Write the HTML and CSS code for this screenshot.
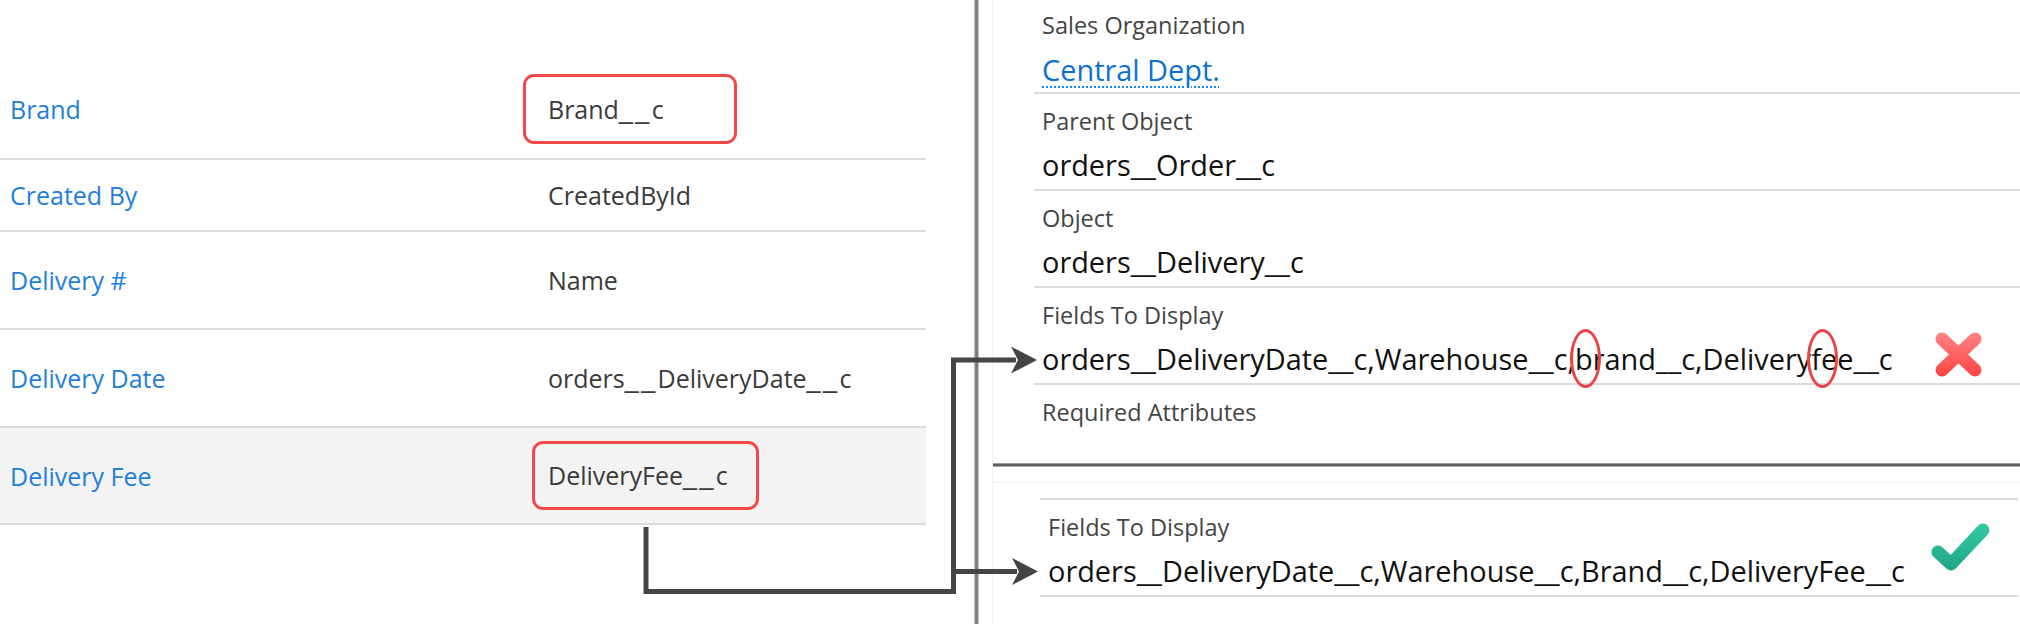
FILE: index.html
```html
<!DOCTYPE html>
<html lang="en">
<head>
<meta charset="utf-8">
<title>Fields To Display</title>
<link rel="stylesheet" href="styles.css">
</head>
<body>
<div class="page">
  <section class="left">
    <div class="row r1"><span class="lbl">Brand</span><span class="val"><span class="box box-brand">Brand<span class="us">__</span>c</span></span></div>
    <div class="row r2"><span class="lbl">Created By</span><span class="val">CreatedById</span></div>
    <div class="row r3"><span class="lbl">Delivery #</span><span class="val">Name</span></div>
    <div class="row r4"><span class="lbl">Delivery Date</span><span class="val">orders<span class="us">__</span>DeliveryDate<span class="us">__</span>c</span></div>
    <div class="row r5"><span class="lbl">Delivery Fee</span><span class="val"><span class="box box-fee">DeliveryFee<span class="us">__</span>c</span></span></div>
  </section>
  <div class="spacer"></div>
  <div class="vsep"></div>
  <section class="right">
    <div class="panel">
      <div class="group g1">
        <div class="field first">
          <div class="flabel">Sales Organization</div>
          <div class="fval"><span class="link">Central Dept.</span></div>
        </div>
        <div class="field">
          <div class="flabel">Parent Object</div>
          <div class="fval">orders__Order__c</div>
        </div>
        <div class="field">
          <div class="flabel">Object</div>
          <div class="fval">orders__Delivery__c</div>
        </div>
        <div class="field">
          <div class="flabel">Fields To Display</div>
          <div class="fval">orders__DeliveryDate__c,Warehouse__c,<span class="circ circ-b">b</span>rand__c,Delivery<span class="circ circ-f">f</span>ee__c</div>
        </div>
        <div class="field req">
          <div class="flabel">Required Attributes</div>
        </div>
      </div>
      <div class="thick"></div>
      <div class="faint"></div>
      <div class="group g2">
        <div class="field">
          <div class="flabel">Fields To Display</div>
          <div class="fval">orders__DeliveryDate__c,Warehouse__c,Brand__c,DeliveryFee__c</div>
        </div>
      </div>
    </div>
  </section>
</div>
<svg class="overlay" width="2020" height="624" viewBox="0 0 2020 624" aria-hidden="true">
  <defs>
    <linearGradient id="redg" gradientUnits="userSpaceOnUse" x1="0" y1="332" x2="0" y2="377">
      <stop offset="0" stop-color="#ff8484"/>
      <stop offset="1" stop-color="#ff4242"/>
    </linearGradient>
    <linearGradient id="greeng" gradientUnits="userSpaceOnUse" x1="0" y1="524" x2="0" y2="574">
      <stop offset="0" stop-color="#34c9a3"/>
      <stop offset="1" stop-color="#1ea283"/>
    </linearGradient>
  </defs>
  <path d="M646 527 V591.5 H953.5 V360 H1016" fill="none" stroke="#454545" stroke-width="5"/>
  <path d="M953.5 571.5 H1017" fill="none" stroke="#454545" stroke-width="5"/>
  <path d="M1037 360 L1011 346.5 L1018 360 L1011 373.5 Z" fill="#454545"/>
  <path d="M1038 571.5 L1012 558 L1019 571.5 L1012 585 Z" fill="#454545"/>
  <g stroke="url(#redg)" stroke-width="13" stroke-linecap="round">
    <line x1="1942" y1="339" x2="1975" y2="370"/>
    <line x1="1975" y1="339" x2="1942" y2="370"/>
  </g>
  <polyline points="1938,552 1951,564 1983,530" fill="none" stroke="url(#greeng)" stroke-width="13" stroke-linecap="round" stroke-linejoin="round"/>
</svg>
</body>
</html>
```

FILE: styles.css
```css
html, body {
  margin: 0;
  padding: 0;
}

body {
  width: 2020px;
  height: 624px;
  overflow: hidden;
  background: #ffffff;
  font-family: "Open Sans", "Noto Sans", sans-serif;
  position: relative;
}

.page {
  display: flex;
  height: 624px;
}

/* ---------- left related-list table ---------- */
.left {
  flex: 0 0 926px;
  padding-top: 60px;
}

.row {
  display: flex;
  align-items: center;
  border-bottom: 2px solid #dddbda;
  padding-left: 10px;
}

.r1 { height: 98px; }
.r2 { height: 70px; }
.r3, .r4 { height: 96px; }
.r5 { height: 95px; background: #f3f3f3; }

.lbl {
  flex: 0 0 538px;
  color: #1f80d9;
  font-size: 25px;
}

.val {
  color: #3a3a3a;
  font-size: 25px;
  white-space: nowrap;
}

.us {
  font-family: "Liberation Sans", "Open Sans", sans-serif;
  letter-spacing: 2.5px;
}

.box {
  display: inline-block;
  box-sizing: border-box;
  border: 3px solid #f24848;
  border-radius: 11px;
}

.box-brand {
  width: 214px;
  height: 70px;
  margin-left: -25px;
  padding-left: 22px;
  line-height: 64px;
}

.box-fee {
  width: 227px;
  height: 69px;
  margin-left: -16px;
  padding-left: 13px;
  line-height: 63px;
}

/* ---------- divider ---------- */
.spacer {
  flex: 0 0 48px;
}

.vsep {
  flex: 0 0 5px;
  background: linear-gradient(to right, #d6d6d6, #8c8c8c 30%, #727272 60%, #a9a9a9 85%, #e2e2e2);
}

/* ---------- right record detail ---------- */
.right {
  flex: 1;
  padding-left: 13px;
}

.panel {
  height: 100%;
  border-left: 1px solid #f2f2f2;
}

.g1 {
  margin-left: 41px;
}

.field {
  border-bottom: 2px solid #dddbda;
  padding: 12px 0 4px 8px;
}

.flabel {
  font-size: 23.5px;
  line-height: 30px;
  color: #444444;
}

.fval {
  font-size: 28.9px;
  line-height: 40px;
  margin-top: 9px;
  color: #111111;
  white-space: nowrap;
}

.first {
  padding-top: 10px;
  padding-bottom: 2px;
}

.first .fval {
  margin-top: 10px;
}

.link {
  color: #0c70d2;
  text-decoration: underline dotted #1589ee;
  text-decoration-thickness: 2px;
  text-underline-offset: 5px;
}

.req {
  border-bottom: none;
  padding-bottom: 36px;
}

.thick {
  height: 4px;
  background: linear-gradient(to bottom, #bdbdbd, #555555 40%, #5e5e5e 65%, #cfcfcf);
}

.faint {
  margin-top: 15px;
  height: 1px;
  background: #efefef;
}

.g2 {
  margin: 15px 2px 0 47px;
  border-top: 2px solid #dddbda;
}

.circ {
  position: relative;
}

.circ::after {
  content: "";
  position: absolute;
  left: 50%;
  top: 50%;
  width: 25px;
  height: 53px;
  margin-top: -29.5px;
  border: 3px solid #ee4242;
  border-radius: 50%;
}

.circ-b::after {
  margin-left: -13.5px;
}

.circ-f::after {
  margin-left: -9.5px;
}

/* ---------- annotation overlay ---------- */
.overlay {
  position: absolute;
  left: 0;
  top: 0;
  pointer-events: none;
}
```
